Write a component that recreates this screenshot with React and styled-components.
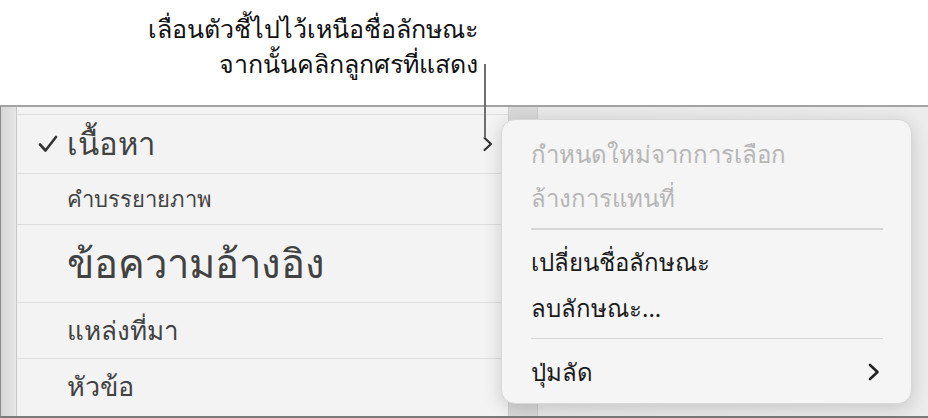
import React from "react";
import styled, { createGlobalStyle } from "styled-components";

const GlobalStyle = createGlobalStyle`
  html, body {
    margin: 0;
    padding: 0;
    background: #fff;
  }
  body {
    font-family: "Noto Sans", "DejaVu Sans", sans-serif;
    -webkit-font-smoothing: antialiased;
  }
`;

const Page = styled.div`
  width: 928px;
  height: 418px;
  display: flex;
  flex-direction: column;
  overflow: hidden;
`;

const Callout = styled.div`
  height: 105px;
  display: flex;
  justify-content: flex-end;
  padding-right: 450px;
  box-sizing: border-box;
  position: relative;
`;

const CalloutText = styled.div`
  padding-top: 11px;
  text-align: right;
  font-size: 25px;
  line-height: 35px;
  color: #111;
`;

const Leader = styled.div`
  position: absolute;
  left: 484px;
  top: 64px;
  width: 1.5px;
  height: 74px;
  background: #6e6e6e;
  z-index: 3;
`;

const Screen = styled.div`
  flex: 1;
  display: flex;
  border-top: 2px solid #a3a3a3;
  border-bottom: 2px solid #7a7a7a;
  border-left: 1px solid #8a8a8a;
  background: linear-gradient(90deg, #e2e2e2, #ececec);
  position: relative;
`;

const Gutter = styled.div`
  width: 15px;
  background: linear-gradient(90deg, #d6d6d6, #e6e6e6);
  border-right: 1px solid #c8c8c8;
`;

const StyleList = styled.div`
  width: 491px;
  background: #f3f3f3;
  padding-top: 7px;
  border-right: 1px solid #cfcfcf;
`;

const Row = styled.div`
  height: ${(p) => p.$h}px;
  border-top: 1.5px solid #dedede;
  display: flex;
  align-items: center;
  padding-left: 20px;
  padding-right: 14px;
  box-sizing: border-box;
  color: #424242;
  font-size: ${(p) => p.$size}px;
  font-weight: ${(p) => (p.$bold ? 500 : 400)};
`;

const Check = styled.span`
  width: 30px;
  display: inline-flex;
  align-items: center;
`;

const RowLabel = styled.span`
  flex: 1;
`;

const SideStrip = styled.div`
  width: 28px;
  background: #d9d9d9;
  border-right: 1px solid #cbcbcb;
`;

const Menu = styled.div`
  position: absolute;
  left: 500px;
  top: 12px;
  width: 411px;
  height: 285px;
  box-sizing: border-box;
  background: #f5f5f5;
  border-radius: 14px;
  border: 1px solid #d8d8d8;
  box-shadow: 0 4px 18px rgba(0, 0, 0, 0.16);
  padding: 12px 28px 0 29px;
  z-index: 2;
`;

const MenuItem = styled.div`
  height: ${(p) => p.$h || 46}px;
  display: flex;
  align-items: center;
  font-size: 24px;
  color: ${(p) => (p.$disabled ? "#b6b6b6" : "#1b1b1b")};
  svg {
    margin-right: 2px;
  }
`;

const Divider = styled.div`
  height: 1.5px;
  background: #d6d6d6;
  margin: ${(p) => p.$top}px 0 10px;
`;

const Chevron = ({ w = 14, h = 20, color = "#333" }) => (
  <svg width={w} height={h} viewBox="0 0 14 20">
    <path
      d="M3 3 L10.5 10 L3 17"
      fill="none"
      stroke={color}
      strokeWidth="2.6"
      strokeLinecap="round"
      strokeLinejoin="round"
    />
  </svg>
);

const CheckMark = () => (
  <svg width="22" height="22" viewBox="0 0 22 22">
    <path
      d="M3 11.5 L8.5 17.5 L19 4"
      fill="none"
      stroke="#333"
      strokeWidth="2.6"
      strokeLinecap="round"
      strokeLinejoin="round"
    />
  </svg>
);

const rows = [
  { label: "เนื้อหา", h: 59, size: 31, bold: true, checked: true, arrow: true },
  { label: "คำบรรยายภาพ", h: 51, size: 22 },
  { label: "ข้อความอ้างอิง", h: 78, size: 40, bold: true },
  { label: "แหล่งที่มา", h: 56, size: 26 },
  { label: "หัวข้อ", h: 56, size: 27 },
];

export default function App() {
  return (
    <Page>
      <GlobalStyle />
      <Callout>
        <CalloutText>
          เลื่อนตัวชี้ไปไว้เหนือชื่อลักษณะ
          <br />
          จากนั้นคลิกลูกศรที่แสดง
        </CalloutText>
        <Leader />
      </Callout>
      <Screen>
        <Gutter />
        <StyleList>
          {rows.map((r) => (
            <Row key={r.label} $h={r.h} $size={r.size} $bold={r.bold}>
              <Check>{r.checked && <CheckMark />}</Check>
              <RowLabel>{r.label}</RowLabel>
              {r.arrow && <Chevron w={12} h={18} />}
            </Row>
          ))}
        </StyleList>
        <SideStrip />
        <Menu>
          <MenuItem $h={44} $disabled>กำหนดใหม่จากการเลือก</MenuItem>
          <MenuItem $h={44} $disabled>ล้างการแทนที่</MenuItem>
          <Divider $top={8} />
          <MenuItem>เปลี่ยนชื่อลักษณะ</MenuItem>
          <MenuItem>ลบลักษณะ...</MenuItem>
          <Divider $top={6} />
          <MenuItem>
            <RowLabel>ปุ่มลัด</RowLabel>
            <Chevron color="#222" />
          </MenuItem>
        </Menu>
      </Screen>
    </Page>
  );
}
